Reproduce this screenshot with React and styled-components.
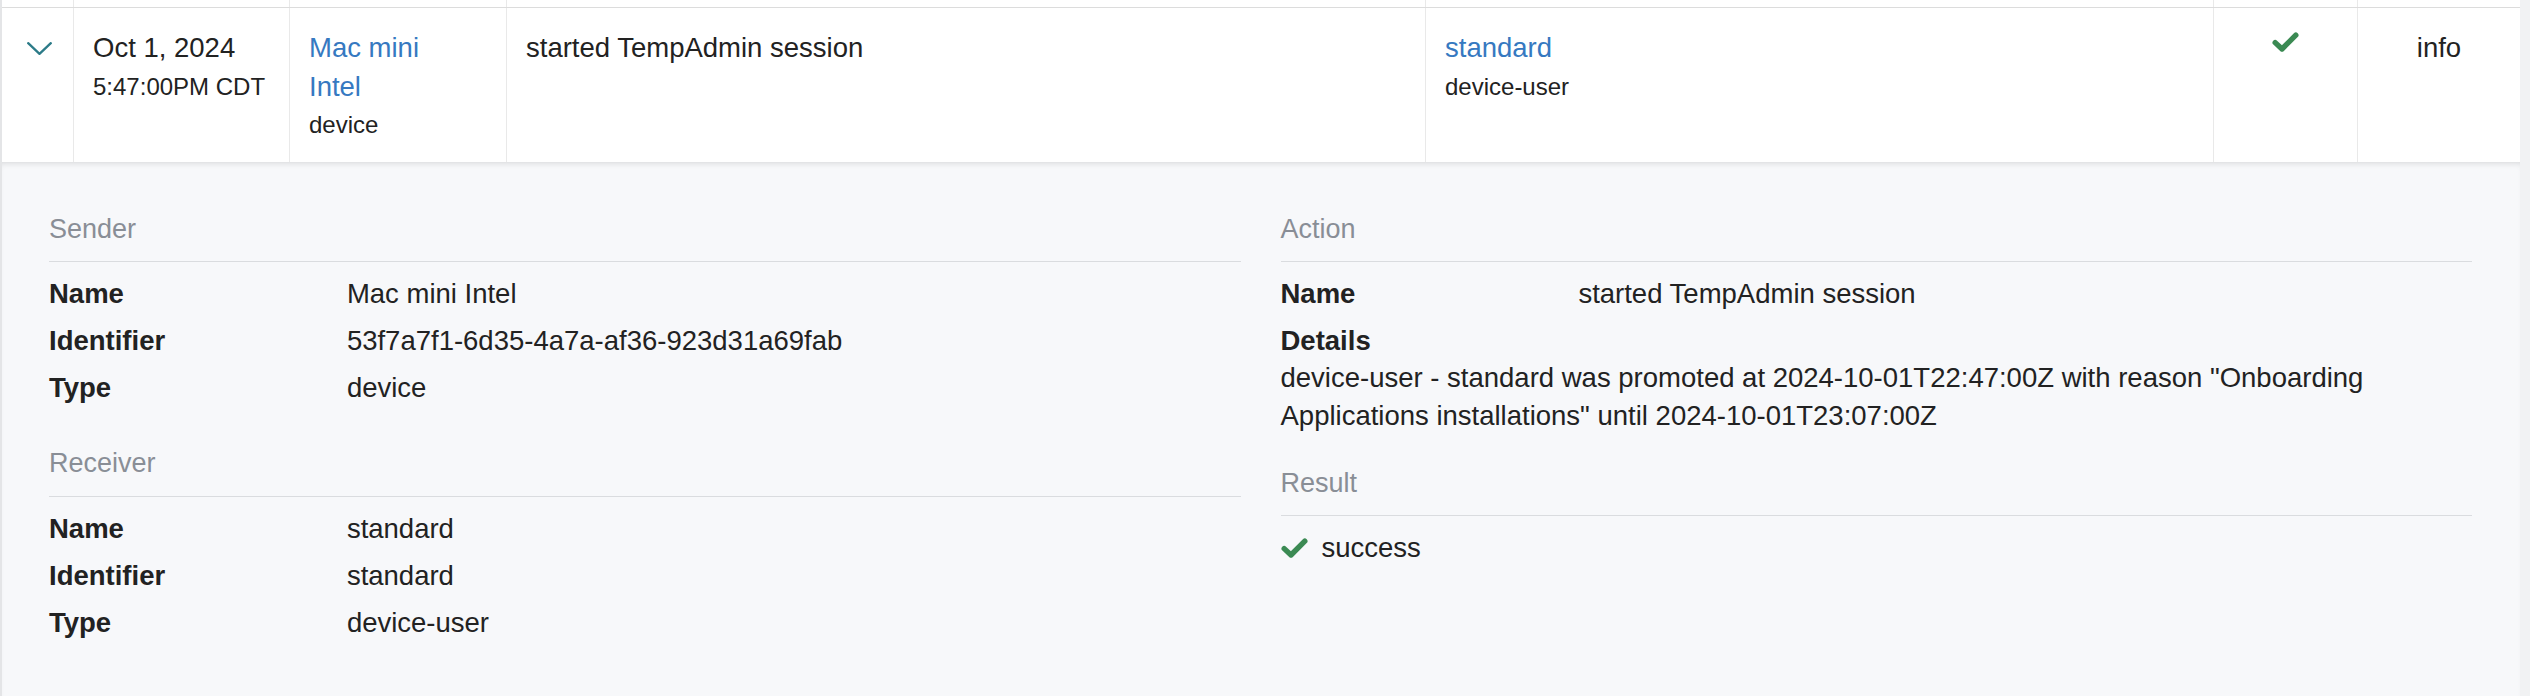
import React from "react";
import styled, { createGlobalStyle } from "styled-components";

const GlobalStyle = createGlobalStyle`
  html, body {
    margin: 0;
    padding: 0;
  }
  body {
    background: #f1f2f3;
    font-family: "Liberation Sans", Arial, Helvetica, sans-serif;
    color: #222;
  }
`;

const COLUMNS = "71px 216px 217px 919px 788px 144px 163px";

const sender = [
  { label: "Name", value: "Mac mini Intel" },
  { label: "Identifier", value: "53f7a7f1-6d35-4a7a-af36-923d31a69fab" },
  { label: "Type", value: "device" },
];

const receiver = [
  { label: "Name", value: "standard" },
  { label: "Identifier", value: "standard" },
  { label: "Type", value: "device-user" },
];

function Chevron() {
  return (
    <svg width="25" height="13" viewBox="0 0 25 13">
      <polyline
        points="1.2,1.2 12.5,11.8 23.8,1.2"
        fill="none"
        stroke="currentColor"
        strokeWidth="2.3"
        strokeLinecap="round"
        strokeLinejoin="round"
      />
    </svg>
  );
}

function Check() {
  return (
    <CheckIcon width="27" height="20" viewBox="0 0 27 20">
      <path
        d="M3.2 10.6 L10 17 L23.8 3.2"
        fill="none"
        stroke="currentColor"
        strokeWidth="5.4"
        strokeLinecap="round"
        strokeLinejoin="round"
      />
    </CheckIcon>
  );
}

function FieldRows({ rows }) {
  return rows.map((r) => (
    <Field key={r.label}>
      <Label>{r.label}</Label>
      <Value>{r.value}</Value>
    </Field>
  ));
}

export default function App() {
  return (
    <>
      <GlobalStyle />
      <Table>
        <Row $stub>
          {Array.from({ length: 7 }).map((_, i) => (
            <StubCell key={i} $first={i === 0} />
          ))}
        </Row>
        <Row>
          <ToggleCell>
            <Chevron />
          </ToggleCell>
          <Cell>
            <div>Oct 1, 2024</div>
            <Small>5:47:00PM CDT</Small>
          </Cell>
          <Cell $padRight={40}>
            <Link>Mac mini Intel</Link>
            <Small>device</Small>
          </Cell>
          <Cell>started TempAdmin session</Cell>
          <Cell>
            <Link>standard</Link>
            <Small>device-user</Small>
          </Cell>
          <IconCell>
            <Check />
          </IconCell>
          <Cell $center>info</Cell>
        </Row>
        <Panel>
          <Column>
            <Section>
              <SectionTitle>Sender</SectionTitle>
              <FieldList>
                <FieldRows rows={sender} />
              </FieldList>
            </Section>
            <Section>
              <SectionTitle>Receiver</SectionTitle>
              <FieldList>
                <FieldRows rows={receiver} />
              </FieldList>
            </Section>
          </Column>
          <Column>
            <Section>
              <SectionTitle>Action</SectionTitle>
              <FieldList>
                <Field>
                  <Label>Name</Label>
                  <Value>started TempAdmin session</Value>
                </Field>
                <DetailsLabel>Details</DetailsLabel>
                <DetailsText>
                  device-user - standard was promoted at 2024-10-01T22:47:00Z
                  with reason "Onboarding Applications installations" until
                  2024-10-01T23:07:00Z
                </DetailsText>
              </FieldList>
            </Section>
            <Section>
              <SectionTitle>Result</SectionTitle>
              <FieldList>
                <ResultLine>
                  <Check />
                  <span>success</span>
                </ResultLine>
              </FieldList>
            </Section>
          </Column>
        </Panel>
      </Table>
    </>
  );
}

const Table = styled.div`
  width: 2518px;
  border-left: 2px solid #e4e5e7;
  background: #fff;
`;

const Row = styled.div`
  display: grid;
  grid-template-columns: ${COLUMNS};
  height: ${(p) => (p.$stub ? "7px" : "auto")};
  border-top: ${(p) => (p.$stub ? "none" : "1px solid #dcdcdc")};
  font-size: 27.5px;
  line-height: 38.5px;
  background: #fff;
`;

const StubCell = styled.div`
  border-left: ${(p) => (p.$first ? "none" : "1px solid #e9e9e9")};
`;

const Cell = styled.div`
  border-left: 1px solid #e9e9e9;
  padding: 21px ${(p) => p.$padRight ?? 19}px 17px 19px;
  text-align: ${(p) => (p.$center ? "center" : "left")};
  color: #222;
`;

const ToggleCell = styled.div`
  padding: 34px 0 0 25px;
  color: #2c7b88;
  svg {
    display: block;
  }
`;

const IconCell = styled.div`
  border-left: 1px solid #e9e9e9;
  display: flex;
  justify-content: center;
  align-items: flex-start;
  padding-top: 24px;
  color: #3b8a53;
`;

const Link = styled.a`
  display: block;
  color: #3679c1;
  text-decoration: none;
`;

const Small = styled.div`
  font-size: 24px;
  color: #222;
`;

const Panel = styled.div`
  display: grid;
  grid-template-columns: 1fr 1fr;
  column-gap: 40px;
  padding: 48px 48px 80px 47px;
  background: #f7f8fa;
  box-shadow: inset 0 5px 6px -4px rgba(0, 0, 0, 0.14);
  font-size: 27.5px;
  line-height: 38.5px;
`;

const Column = styled.div`
  display: flex;
  flex-direction: column;
`;

const Section = styled.section`
  margin-bottom: 28px;
`;

const SectionTitle = styled.h4`
  margin: 0;
  padding-bottom: 13px;
  border-bottom: 1px solid #dadcdf;
  font-size: 27px;
  font-weight: normal;
  line-height: 38.5px;
  color: #898e96;
`;

const FieldList = styled.dl`
  margin: 0;
  padding-top: 13px;
`;

const Field = styled.div`
  display: flex;
  margin-bottom: 8.5px;
`;

const Label = styled.dt`
  width: 25%;
  flex: none;
  font-weight: bold;
`;

const Value = styled.dd`
  margin: 0;
  flex: 1;
`;

const DetailsLabel = styled.dt`
  font-weight: bold;
`;

const DetailsText = styled.dd`
  margin: -2px 0 0;
`;

const ResultLine = styled.div`
  display: flex;
  align-items: center;
  gap: 14px;
  color: #222;
  svg {
    color: #3b8a53;
  }
`;

const CheckIcon = styled.svg`
  display: block;
  flex: none;
`;
